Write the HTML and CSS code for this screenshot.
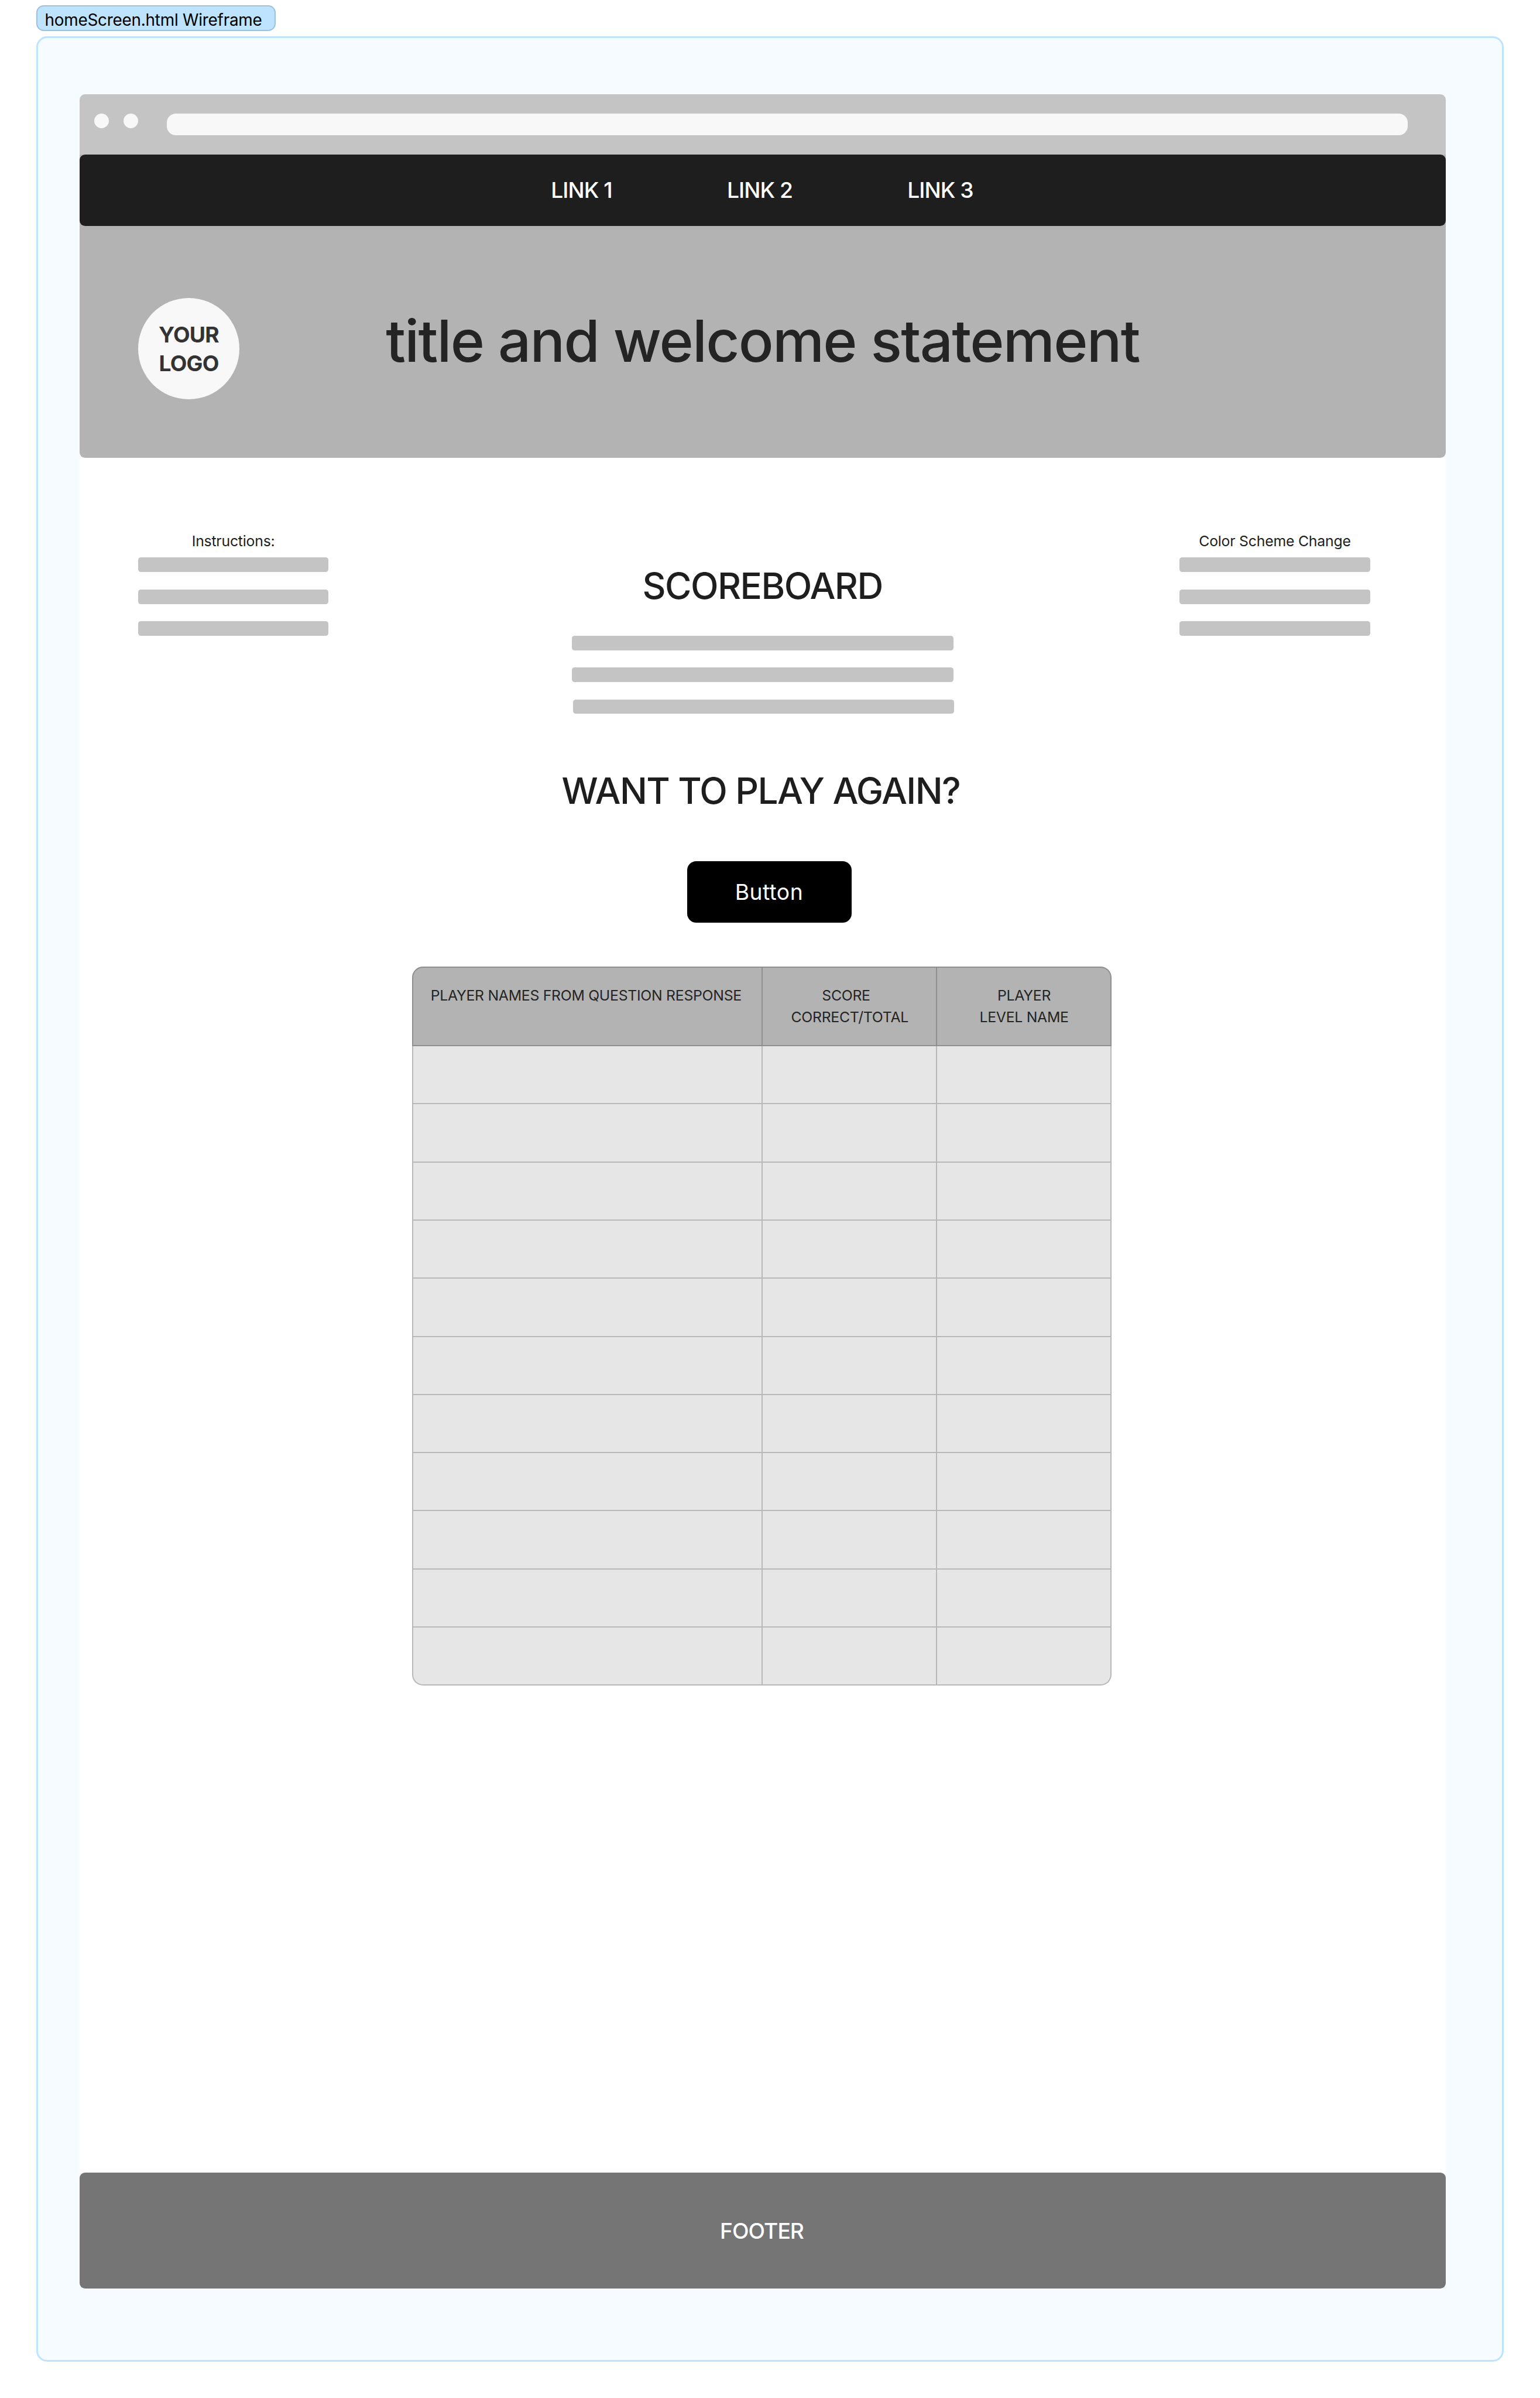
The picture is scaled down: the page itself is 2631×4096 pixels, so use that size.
FILE: index.html
```html
<!DOCTYPE html>
<html lang="en">
<head>
<meta charset="utf-8">
<title>homeScreen.html Wireframe</title>
<link rel="stylesheet" href="styles.css">
</head>
<body>
<div class="board">
  <div class="label">homeScreen.html Wireframe</div>
  <div class="frame">
    <div class="page">
      <div class="chrome">
        <span class="dot"></span>
        <span class="dot"></span>
        <span class="address"></span>
      </div>
      <div class="nav-wrap">
        <nav class="nav">
          <a class="link">LINK 1</a>
          <a class="link">LINK 2</a>
          <a class="link">LINK 3</a>
        </nav>
      </div>
      <header class="hero">
        <div class="logo">YOUR<br>LOGO</div>
        <h1 class="title">title and welcome statement</h1>
      </header>
      <main class="main">
        <aside class="side">
          <p class="side-title">Instructions:</p>
          <div class="bars"><span class="bar"></span><span class="bar"></span><span class="bar"></span></div>
        </aside>
        <section class="center">
          <h2 class="heading">SCOREBOARD</h2>
          <div class="bars bars-wide"><span class="bar"></span><span class="bar"></span><span class="bar bar-shifted"></span></div>
          <h2 class="heading heading-again">WANT TO PLAY AGAIN?</h2>
          <button class="button">Button</button>
          <div class="table">
            <div class="row head">
              <div class="cell cell-names">PLAYER NAMES FROM QUESTION RESPONSE</div>
              <div class="cell"><span class="score">SCORE</span><span>CORRECT/TOTAL</span></div>
              <div class="cell"><span>PLAYER</span><span>LEVEL NAME</span></div>
            </div>
            <div class="row"><div class="cell"></div><div class="cell"></div><div class="cell"></div></div>
            <div class="row"><div class="cell"></div><div class="cell"></div><div class="cell"></div></div>
            <div class="row"><div class="cell"></div><div class="cell"></div><div class="cell"></div></div>
            <div class="row"><div class="cell"></div><div class="cell"></div><div class="cell"></div></div>
            <div class="row"><div class="cell"></div><div class="cell"></div><div class="cell"></div></div>
            <div class="row"><div class="cell"></div><div class="cell"></div><div class="cell"></div></div>
            <div class="row"><div class="cell"></div><div class="cell"></div><div class="cell"></div></div>
            <div class="row"><div class="cell"></div><div class="cell"></div><div class="cell"></div></div>
            <div class="row"><div class="cell"></div><div class="cell"></div><div class="cell"></div></div>
            <div class="row"><div class="cell"></div><div class="cell"></div><div class="cell"></div></div>
            <div class="row"><div class="cell"></div><div class="cell"></div><div class="cell"></div></div>
          </div>
        </section>
        <aside class="side">
          <p class="side-title">Color Scheme Change</p>
          <div class="bars"><span class="bar"></span><span class="bar"></span><span class="bar"></span></div>
        </aside>
      </main>
      <footer class="footer">FOOTER</footer>
    </div>
  </div>
</div>
</body>
</html>
```
FILE: styles.css
```css
/* 1rem is ten units of the board */
html { font-size: 7.7568px; }
*, *::before, *::after { box-sizing: border-box; }
body {
  margin: 0;
  background: #fff;
  color: #1e1e1e;
  font-family: Inter, "Liberation Sans", sans-serif;
  font-weight: 500;
}
h1, h2, p { margin: 0; font-weight: inherit; white-space: nowrap; }

.board { padding: 1.2rem 8rem 8rem; }
.label {
  width: 52.7rem;
  height: 5.6rem;
  margin-bottom: 1.2rem;
  padding: 0.4rem 0 0 1.6rem;
  border: 2px solid #a0c1d9;
  border-radius: 1.6rem;
  background: #bde3ff;
  color: #000;
  font-size: 3.6rem;
  font-weight: 400;
  letter-spacing: -0.009em;
  line-height: 5.2rem;
  white-space: nowrap;
}
.frame {
  height: 512rem;
  padding: 12.4rem 12.4rem 0 9.2rem;
  border: 0.4rem solid #bde3ff;
  border-radius: 2.4rem;
  background: #f5fbff;
}
.page {
  display: flex;
  flex-direction: column;
  height: 483.2rem;
}

.chrome {
  display: flex;
  align-items: flex-start;
  height: 13.2rem;
  padding: 4.2rem 8.4rem 0 3.2rem;
  border-radius: 1.2rem 1.2rem 0 0;
  background: #c4c4c4;
}
.dot {
  width: 3.2rem;
  height: 3.2rem;
  margin-right: 3.2rem;
  border-radius: 50%;
  background: #f8f8f8;
}
.address {
  flex: 1;
  height: 4.8rem;
  margin-left: 3.2rem;
  border-radius: 2rem;
  background: #f8f8f8;
}

.nav-wrap { background: #b3b3b3; }
.nav {
  display: flex;
  justify-content: center;
  gap: 25.3rem;
  height: 15.8rem;
  padding-right: 0.3rem;
  border-radius: 1.2rem;
  background: #1e1e1e;
  color: #fff;
  font-size: 4.8rem;
  letter-spacing: -0.026em;
  line-height: 15.8rem;
}

.hero {
  display: flex;
  height: 51rem;
  padding-left: 12.8rem;
  border-radius: 0 0 1.2rem 1.2rem;
  background: #b3b3b3;
  color: #242424;
}
.logo {
  width: 22.4rem;
  height: 22.4rem;
  margin-top: 15.8rem;
  padding-top: 4.9rem;
  border-radius: 50%;
  background: #f8f8f8;
  color: #333;
  font-size: 4.8rem;
  font-weight: 700;
  letter-spacing: -0.02em;
  line-height: 6.4rem;
  text-align: center;
}
.title {
  margin: 17.3rem 0 0 32.2rem;
  font-size: 12.8rem;
  letter-spacing: -0.018em;
  line-height: 16rem;
}

.main {
  display: grid;
  grid-template-columns: 42rem 154rem 42rem;
  column-gap: 18.4rem;
  flex: 1;
  padding-left: 12.8rem;
  background: #fff;
}
.main > .side:last-child { margin-left: -3.4rem; width: 42rem; }
.side { padding-top: 16rem; text-align: center; }
.side-title {
  color: #1e1e1e;
  font-size: 3.2rem;
  font-weight: 400;
  letter-spacing: -0.009em;
  line-height: 4.8rem;
  margin-bottom: 1.2rem;
}
.bars { display: flex; flex-direction: column; gap: 3.82rem; }
.bar { height: 3.2rem; border-radius: 0.6rem; background: #c4c4c4; }
.bars-wide { width: 84rem; }
.bar-shifted { margin: 0 -0.2rem 0 0.2rem; }

.center {
  display: flex;
  flex-direction: column;
  align-items: center;
  padding-top: 23.2rem;
}
.heading {
  margin-bottom: 6rem;
  padding-left: 0.3rem;
  color: #1e1e1e;
  font-size: 8rem;
  letter-spacing: -0.025em;
  line-height: 10rem;
}
.bars-wide { margin-left: 0.4rem; }
.heading-again { margin: 11.9rem 0 10.5rem; padding: 0 0.4rem 0 0; }
.button {
  width: 36.2rem;
  height: 13.6rem;
  margin-left: 3.4rem;
  padding: 0 0.2rem 0 0;
  border: 0;
  border-radius: 2rem;
  background: #000;
  color: #fff;
  font: 400 4.8rem/13.3rem Inter, "Liberation Sans", sans-serif;
  letter-spacing: 0.012em;
}

.table {
  width: 154rem;
  margin-top: 9.6rem;
  font-size: 3.2rem;
  font-weight: 400;
  letter-spacing: -0.012em;
  line-height: 4.8rem;
}
.row {
  display: grid;
  grid-template-columns: 77.2rem 38.4rem 38.4rem;
  height: 12.8rem;
  text-align: center;
}
.cell {
  border: solid #b8b8b8;
  border-width: 0 2px 2px 0;
  background: #e6e6e6;
}
.cell:first-child { border-left-width: 2px; }
.cell span { display: block; }
.head { height: 17.6rem; }
.head .cell {
  padding: 3.8rem 0 0 0.2rem;
  border-color: #8f8f8f;
  border-top-width: 2px;
  background: #b3b3b3;
  color: #242424;
}
.head .cell:first-child { border-top-left-radius: 2.4rem; }
.head .cell:last-child { border-top-right-radius: 2.4rem; }
.row:last-child .cell:first-child { border-bottom-left-radius: 2.4rem; }
.row:last-child .cell:last-child { border-bottom-right-radius: 2.4rem; }
.head .cell-names { padding-right: 0.8rem; white-space: nowrap; }
.score { padding-right: 1.6rem; }

.footer {
  height: 25.6rem;
  padding-right: 0.4rem;
  border-radius: 1.2rem;
  background: #757575;
  color: #fff;
  font-size: 4.8rem;
  letter-spacing: -0.026em;
  line-height: 25.8rem;
  text-align: center;
}
```
